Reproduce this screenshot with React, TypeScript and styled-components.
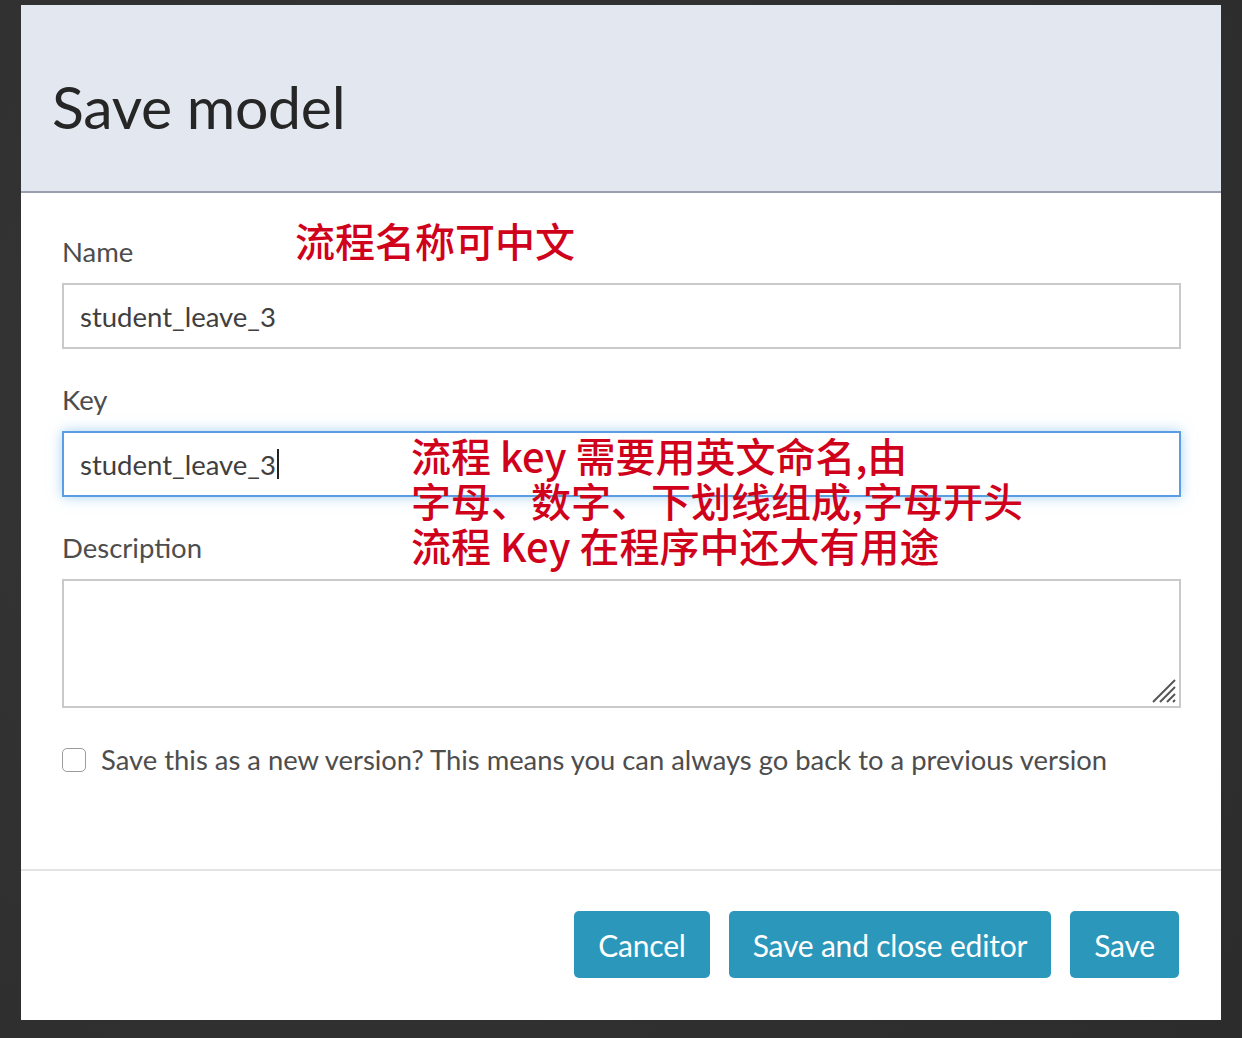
import React from "react";
import styled, { createGlobalStyle } from "styled-components";

const Global = createGlobalStyle`
  html, body { margin: 0; padding: 0; }
  body {
    background: #303030;
    font-family: Lato, "Noto Sans", sans-serif;
    width: 1242px;
    height: 1038px;
    overflow: hidden;
  }
`;

const Backdrop = styled.div`
  width: 1242px;
  height: 1038px;
  padding: 5px 0 0 21px;
  box-sizing: border-box;
  background: radial-gradient(circle at 30% 40%, #363636 0%, #2c2c2c 100%);
`;

const Dialog = styled.div`
  position: relative;
  width: 1200px;
  height: 1015px;
  background: #fff;
  display: flex;
  flex-direction: column;
`;

const Header = styled.div`
  height: 186px;
  background: #e3e7ef;
  border-bottom: 2px solid #9a9faf;
  display: flex;
  align-items: center;
  padding: 0 31px;
  box-sizing: content-box;
`;

const Title = styled.h1`
  margin: 0;
  padding-top: 16px;
  font-family: Lato, sans-serif;
  font-weight: 400;
  font-size: 59px;
  color: #262626;
  letter-spacing: -0.3px;
`;

const Body = styled.div`
  flex: 1;
  padding: 39px 40px 0 41px;
  display: flex;
  flex-direction: column;
`;

const Label = styled.label`
  display: block;
  font-size: 27.5px;
  color: #4d4d4d;
  line-height: 40px;
  margin-bottom: 11px;
`;

const Field = styled.div`
  margin-bottom: 31px;
`;

const Input = styled.div<{ $focused?: boolean }>`
  height: 66px;
  box-sizing: border-box;
  border: 2px solid ${(p) => (p.$focused ? "#5a9de2" : "#c9c9c9")};
  box-shadow: ${(p) => (p.$focused ? "0 0 12px rgba(102,175,233,0.55)" : "none")};
  display: flex;
  align-items: center;
  padding: 0 16px;
  font-size: 27.5px;
  color: #3f3f3f;
`;

const Caret = styled.span`
  display: inline-block;
  width: 2px;
  height: 30px;
  background: #222;
  margin-left: 1px;
`;

const TextArea = styled.div`
  position: relative;
  height: 129px;
  box-sizing: border-box;
  border: 2px solid #c9c9c9;
`;

const Grip = styled.svg`
  position: absolute;
  right: 2px;
  bottom: 2px;
`;

const CheckRow = styled.div`
  display: flex;
  align-items: center;
  gap: 15px;
  margin-top: 4px;
`;

const CheckBox = styled.span`
  width: 24px;
  height: 24px;
  border: 1.5px solid #9c9c9c;
  border-radius: 5px;
  box-sizing: border-box;
  background: #fff;
`;

const CheckText = styled.span`
  font-size: 27.4px;
  color: #4d4d4d;
`;

const Footer = styled.div`
  border-top: 2px solid #e3e3e3;
  height: 151px;
  box-sizing: border-box;
  display: flex;
  justify-content: flex-end;
  align-items: flex-start;
  gap: 19px;
  padding: 40px 42px 0 0;
`;

const Button = styled.button`
  height: 67px;
  padding: 0 24px;
  border: none;
  border-radius: 5px;
  background: #2b97bb;
  color: #fff;
  font-family: Lato, sans-serif;
  font-size: 30px;
  letter-spacing: -0.2px;
`;

const Note = styled.div<{ $x: number; $y: number }>`
  position: absolute;
  left: ${(p) => p.$x}px;
  top: ${(p) => p.$y}px;
  color: #d0021b;
  font-family: "Noto Sans CJK SC", "Noto Sans", sans-serif;
  font-weight: 500;
  font-size: 40px;
  line-height: 45px;
  white-space: nowrap;
`;

export default function App() {
  return (
    <>
      <Global />
      <Backdrop>
        <Dialog>
          <Header>
            <Title>Save model</Title>
          </Header>
          <Body>
            <Field>
              <Label>Name</Label>
              <Input>student_leave_3</Input>
            </Field>
            <Field>
              <Label>Key</Label>
              <Input $focused>
                student_leave_3
                <Caret />
              </Input>
            </Field>
            <Field>
              <Label>Description</Label>
              <TextArea>
                <Grip width="26" height="26" viewBox="0 0 26 26">
                  <g stroke="#555" strokeWidth="2">
                    <line x1="2" y1="24" x2="24" y2="2" />
                    <line x1="9" y1="24" x2="24" y2="9" />
                    <line x1="16" y1="24" x2="24" y2="16" />
                    <line x1="22" y1="24" x2="24" y2="22" />
                  </g>
                </Grip>
              </TextArea>
            </Field>
            <CheckRow>
              <CheckBox />
              <CheckText>
                Save this as a new version? This means you can always go back to a previous version
              </CheckText>
            </CheckRow>
          </Body>
          <Footer>
            <Button>Cancel</Button>
            <Button>Save and close editor</Button>
            <Button>Save</Button>
          </Footer>
          <Note $x={274} $y={213}>流程名称可中文</Note>
          <Note $x={390} $y={428}>
            流程 key 需要用英文命名,由
            <br />
            字母、数字、下划线组成,字母开头
            <br />
            流程 Key 在程序中还大有用途
          </Note>
        </Dialog>
      </Backdrop>
    </>
  );
}
